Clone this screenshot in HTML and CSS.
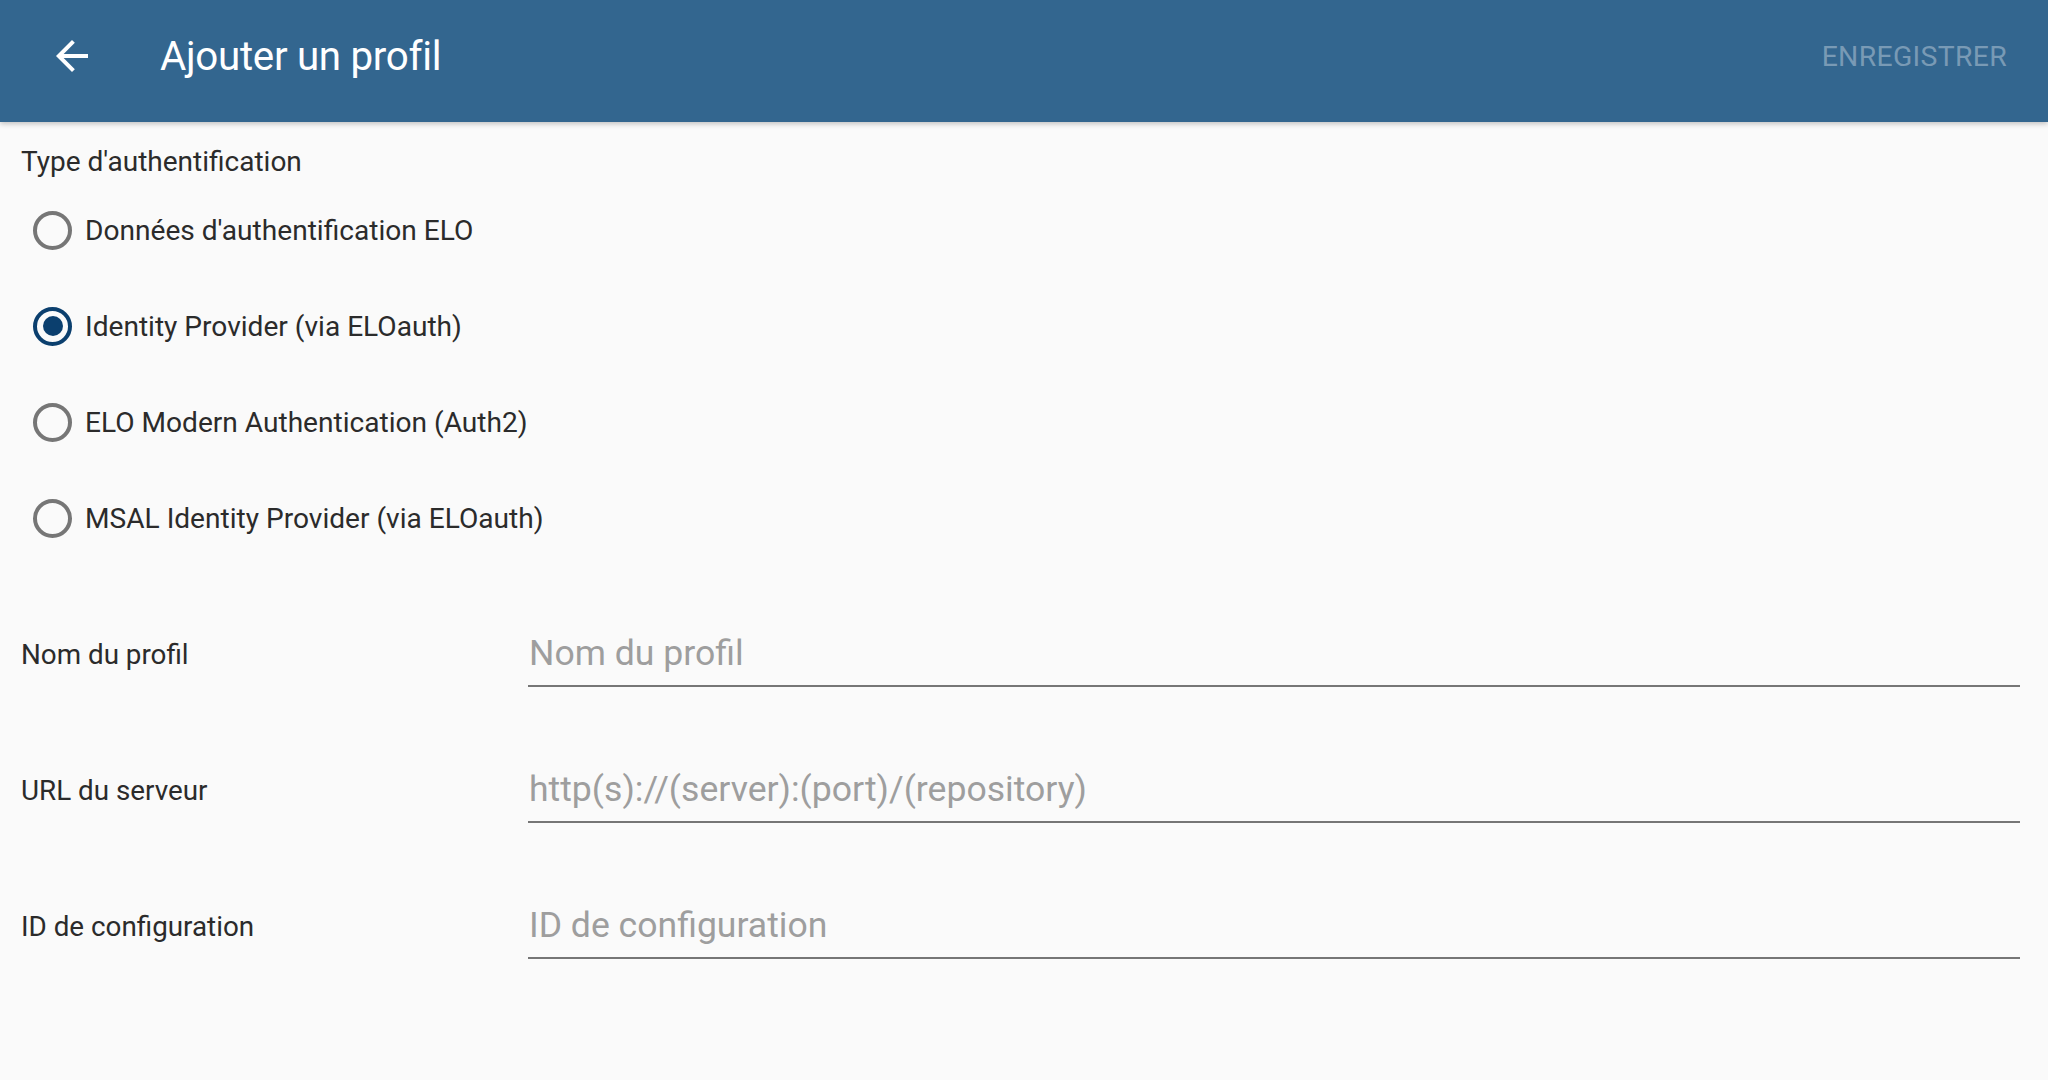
FILE: index.html
```html
<!DOCTYPE html>
<html lang="fr">
<head>
<meta charset="utf-8">
<title>Ajouter un profil</title>
<link rel="stylesheet" href="styles.css">
</head>
<body>
<header class="appbar">
  <button class="back" aria-label="Retour">
    <svg viewBox="0 0 24 24" width="48" height="48"><path fill="#fff" d="M20 11H7.83l5.59-5.59L12 4l-8 8 8 8 1.41-1.41L7.83 13H20v-2z"/></svg>
  </button>
  <h1 class="title">Ajouter un profil</h1>
  <span class="save">ENREGISTRER</span>
</header>
<main class="content">
  <div class="section-label">Type d'authentification</div>
  <ul class="radios">
    <li class="radio-row"><span class="radio"></span><span class="radio-text">Données d'authentification ELO</span></li>
    <li class="radio-row"><span class="radio checked"></span><span class="radio-text">Identity Provider (via ELOauth)</span></li>
    <li class="radio-row"><span class="radio"></span><span class="radio-text">ELO Modern Authentication (Auth2)</span></li>
    <li class="radio-row"><span class="radio"></span><span class="radio-text">MSAL Identity Provider (via ELOauth)</span></li>
  </ul>
  <div class="fields">
    <div class="field-row">
      <label class="field-label">Nom du profil</label>
      <div class="field"><span class="placeholder">Nom du profil</span></div>
    </div>
    <div class="field-row">
      <label class="field-label">URL du serveur</label>
      <div class="field"><span class="placeholder">http(s)://(server):(port)/(repository)</span></div>
    </div>
    <div class="field-row">
      <label class="field-label">ID de configuration</label>
      <div class="field"><span class="placeholder">ID de configuration</span></div>
    </div>
  </div>
</main>
</body>
</html>
```
FILE: styles.css
```css
html, body {
  margin: 0;
  padding: 0;
  background: #fafafa;
  font-family: Roboto, "Liberation Sans", sans-serif;
  color: #2b2b2b;
}

.appbar {
  height: 122px;
  background: #33668f;
  display: flex;
  align-items: center;
  padding: 0 41px 10px 48px;
  box-sizing: border-box;
  box-shadow: 0 2px 5px rgba(0, 0, 0, 0.22);
  position: relative;
}

.back {
  width: 48px;
  height: 48px;
  padding: 0;
  border: 0;
  background: none;
  display: flex;
}

.title {
  margin: 0 0 0 64px;
  font-size: 40.3px;
  font-weight: 400;
  color: #fff;
  flex: 1;
  letter-spacing: -0.3px;
}

.save {
  font-size: 28.4px;
  color: rgba(255, 255, 255, 0.35);
  letter-spacing: 0.3px;
}

.content {
  padding: 22px 28px 0 21px;
}

.section-label {
  font-size: 28px;
  line-height: 36px;
}

.radios {
  list-style: none;
  margin: 2px 0 0 0;
  padding: 0;
}

.radio-row {
  height: 96px;
  display: flex;
  align-items: center;
}

.radio {
  width: 39px;
  height: 39px;
  box-sizing: border-box;
  border: 4px solid #767676;
  border-radius: 50%;
  margin-left: 12px;
  display: flex;
  align-items: center;
  justify-content: center;
}

.radio.checked {
  border-color: #0b3f6e;
}

.radio.checked::after {
  content: "";
  width: 20px;
  height: 20px;
  border-radius: 50%;
  background: #0b3f6e;
}

.radio-text {
  margin-left: 13px;
  font-size: 28.1px;
}

.fields {
  margin-top: 55px;
  display: flex;
  flex-direction: column;
  gap: 70px;
}

.field-row {
  display: grid;
  grid-template-columns: 507px 1fr;
  align-items: center;
}

.field-label {
  font-size: 27.8px;
}

.field {
  height: 66px;
  box-sizing: border-box;
  border-bottom: 2px solid #767676;
  display: flex;
  align-items: center;
}

.placeholder {
  font-size: 35.6px;
  color: #9e9e9e;
  margin-left: 1px;
}
```
